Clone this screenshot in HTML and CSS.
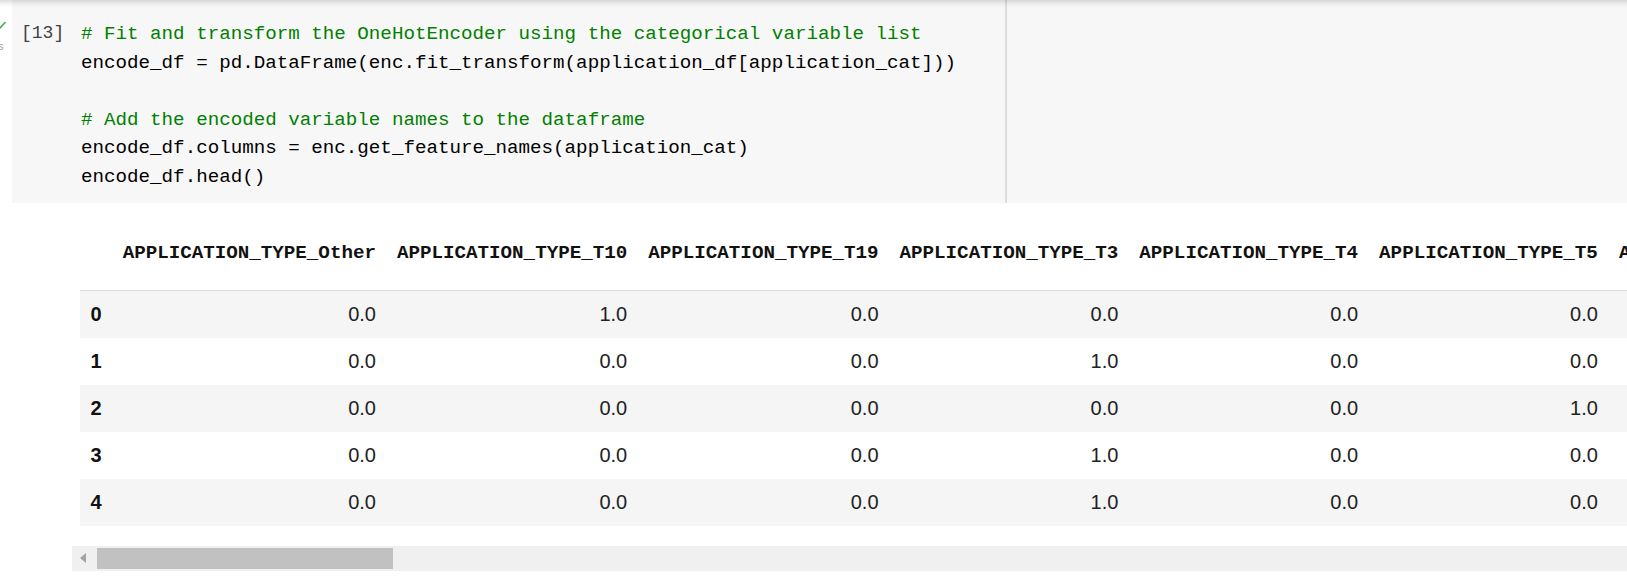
FILE: index.html
```html
<!DOCTYPE html>
<html>
<head>
<meta charset="utf-8">
<link rel="stylesheet" href="styles.css">
</head>
<body>
<div class="topshade"></div>
<div class="cellrow">
  <div class="gutter">
    <svg class="check" width="12" height="32" viewBox="0 0 12 32"><path d="M-4 24 L0 28 L5.5 22" fill="none" stroke="#4caf50" stroke-width="1.6"/></svg>
    <span class="exec-time">0s</span>
  </div>
  <div class="cell">
    <div class="prompt">[13]</div>
    <pre class="code"><span class="cm"># Fit and transform the OneHotEncoder using the categorical variable list</span>
encode_df = pd.DataFrame(enc.fit_transform(application_df[application_cat]))

<span class="cm"># Add the encoded variable names to the dataframe</span>
encode_df.columns = enc.get_feature_names(application_cat)
encode_df.head()</pre>
    <div class="cell-rest"></div>
  </div>
</div>
<div class="output">
  <div class="table-wrap">
    <table class="dataframe">
      <thead>
        <tr>
          <th class="idx"></th>
          <th>APPLICATION_TYPE_Other</th>
          <th>APPLICATION_TYPE_T10</th>
          <th>APPLICATION_TYPE_T19</th>
          <th>APPLICATION_TYPE_T3</th>
          <th>APPLICATION_TYPE_T4</th>
          <th>APPLICATION_TYPE_T5</th>
          <th>APPLICATION_TYPE_T6</th>
          <th>APPLICATION_TYPE_T7</th>
        </tr>
      </thead>
      <tbody>
        <tr><th class="idx">0</th><td>0.0</td><td>1.0</td><td>0.0</td><td>0.0</td><td>0.0</td><td>0.0</td><td>0.0</td><td>0.0</td></tr>
        <tr><th class="idx">1</th><td>0.0</td><td>0.0</td><td>0.0</td><td>1.0</td><td>0.0</td><td>0.0</td><td>0.0</td><td>0.0</td></tr>
        <tr><th class="idx">2</th><td>0.0</td><td>0.0</td><td>0.0</td><td>0.0</td><td>0.0</td><td>1.0</td><td>0.0</td><td>0.0</td></tr>
        <tr><th class="idx">3</th><td>0.0</td><td>0.0</td><td>0.0</td><td>1.0</td><td>0.0</td><td>0.0</td><td>0.0</td><td>0.0</td></tr>
        <tr><th class="idx">4</th><td>0.0</td><td>0.0</td><td>0.0</td><td>1.0</td><td>0.0</td><td>0.0</td><td>0.0</td><td>0.0</td></tr>
      </tbody>
    </table>
  </div>
  <div class="hscroll">
    <div class="arrow-area"><span class="arrow-left"></span></div>
    <div class="thumb"></div>
  </div>
</div>
</body>
</html>
```

FILE: styles.css
```css
html, body {
  margin: 0;
  padding: 0;
  background: #ffffff;
}
body {
  width: 1627px;
  height: 585px;
  overflow: hidden;
  font-family: "Liberation Sans", Arial, sans-serif;
}
.topshade {
  position: fixed;
  top: 0;
  left: 0;
  right: 0;
  height: 7px;
  background: linear-gradient(to bottom, rgba(0,0,0,0.13), rgba(0,0,0,0.04) 60%, rgba(0,0,0,0));
  z-index: 5;
}
.cellrow {
  display: flex;
  height: 203px;
}
.gutter {
  width: 12px;
  flex: none;
  overflow: hidden;
  display: flex;
  flex-direction: column;
}
.check {
  display: block;
}
.exec-time {
  display: block;
  margin-left: -7px;
  margin-top: 10px;
  font-family: "Liberation Sans", Arial, sans-serif;
  font-size: 10px;
  line-height: 10px;
  color: #9e9e9e;
}
.cell {
  flex: 1;
  display: flex;
  background: #f7f7f7;
}
.prompt {
  width: 60px;
  padding-left: 9px;
  padding-top: 19px;
  font-family: "Liberation Mono", "DejaVu Sans Mono", monospace;
  font-size: 18px;
  line-height: 28.5px;
  color: #424242;
}
.code {
  margin: 0;
  width: 924px;
  padding: 20px 0 0 0;
  font-family: "Liberation Mono", "DejaVu Sans Mono", monospace;
  font-size: 19.2px;
  line-height: 28.5px;
  color: #000000;
  border-right: 2px solid #dcdcdc;
  white-space: pre;
}
.cm {
  color: #008000;
}
.cell-rest {
  flex: 1;
}
.output {
  margin-left: 72px;
  padding-top: 26.5px;
}
.table-wrap {
  overflow: hidden;
  padding-left: 8px;
}
.dataframe {
  border-collapse: collapse;
  white-space: nowrap;
  color: #000000;
}
.dataframe thead th {
  font-family: "Liberation Mono", "DejaVu Sans Mono", monospace;
  font-weight: bold;
  font-size: 19.2px;
  line-height: 23px;
  text-align: right;
  padding: 12px 10.5px 25px;
  border-bottom: 1px solid #dadada;
  color: #111111;
}
.dataframe td {
  font-family: "Liberation Sans", Arial, sans-serif;
  font-size: 20px;
  line-height: 23px;
  text-align: right;
  padding: 12px 10.5px;
  color: #222222;
}
.dataframe tbody th.idx {
  font-family: "Liberation Sans", Arial, sans-serif;
  font-weight: bold;
  font-size: 20px;
  line-height: 23px;
  text-align: left;
  padding: 12px 10.5px;
  color: #111111;
}
.dataframe tbody tr:nth-child(odd) {
  background: #f5f5f5;
}
.hscroll {
  margin-top: 20px;
  height: 25px;
  background: #f0f0f0;
  display: flex;
  align-items: center;
}
.arrow-area {
  width: 25px;
  height: 25px;
  display: flex;
  align-items: center;
  justify-content: flex-start;
  padding-left: 8px;
  box-sizing: border-box;
}
.arrow-left {
  width: 0;
  height: 0;
  border-top: 5px solid transparent;
  border-bottom: 5px solid transparent;
  border-right: 6px solid #a3a3a3;
}
.thumb {
  width: 296px;
  height: 21px;
  background: #c1c1c1;
}
```
